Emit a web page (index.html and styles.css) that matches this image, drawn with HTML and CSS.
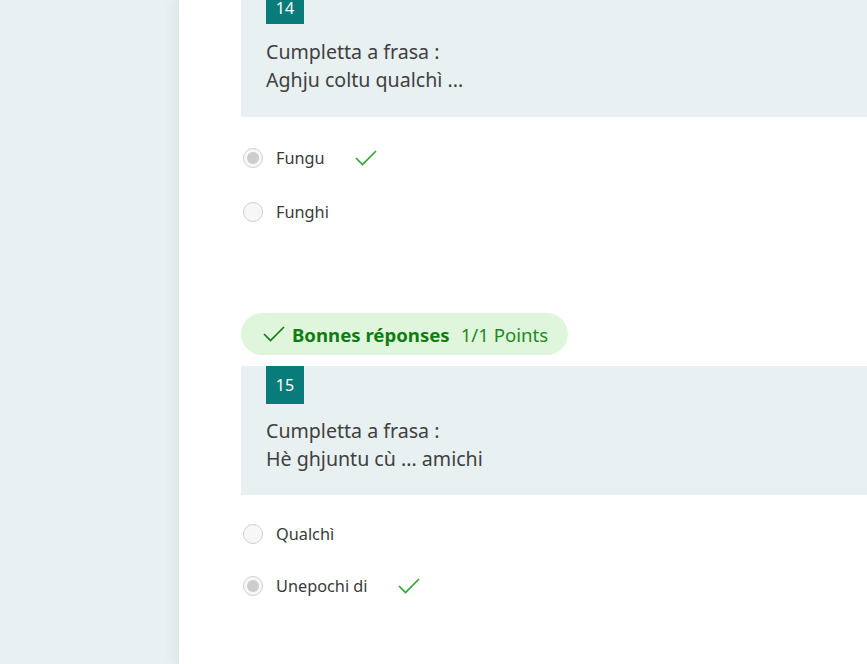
FILE: index.html
```html
<!DOCTYPE html>
<html>
<head>
<meta charset="utf-8">
<link rel="stylesheet" href="styles.css">
</head>
<body>
<div class="page">
  <div class="side"></div>
  <main class="card">
    <section class="question first">
      <div class="qblock">
        <div class="num">14</div>
        <div class="qtext">Cumpletta a frasa :<br>Aghju coltu qualchì ...</div>
      </div>
      <div class="options">
        <div class="opt"><span class="radio on"></span><span class="label">Fungu</span>
          <svg class="tick" width="22" height="16" viewBox="0 0 22 16"><path d="M1 8 L7.5 14.5 L21 1" fill="none" stroke="#2ea52e" stroke-width="1.6"/></svg></div>
        <div class="opt"><span class="radio"></span><span class="label">Funghi</span></div>
      </div>
    </section>

    <section class="question second">
      <div class="pill">
        <svg class="pilltick" width="22" height="16" viewBox="0 0 22 16"><path d="M1 8 L7.5 14.5 L21 1" fill="none" stroke="#107c10" stroke-width="1.6"/></svg>
        <span class="good">Bonnes réponses</span>
        <span class="pts">1/1 Points</span>
      </div>
      <div class="qblock">
        <div class="num">15</div>
        <div class="qtext">Cumpletta a frasa :<br>Hè ghjuntu cù ... amichi</div>
      </div>
      <div class="options tight">
        <div class="opt"><span class="radio"></span><span class="label">Qualchì</span></div>
        <div class="opt"><span class="radio on"></span><span class="label">Unepochi di</span>
          <svg class="tick" width="22" height="16" viewBox="0 0 22 16"><path d="M1 8 L7.5 14.5 L21 1" fill="none" stroke="#2ea52e" stroke-width="1.6"/></svg></div>
      </div>
    </section>
  </main>
</div>
</body>
</html>
```

FILE: styles.css
```css
html, body {
  margin: 0;
  padding: 0;
  height: 100%;
  overflow: hidden;
}
body {
  background: #e9f0f2;
  font-family: "Noto Sans", "Open Sans", sans-serif;
  color: #333;
}
.page {
  display: flex;
  height: 664px;
}
.side {
  width: 179px;
  flex: none;
}
.card {
  flex: 1;
  background: #fff;
  padding-left: 62px;
  box-shadow: -4px 0 12px rgba(60, 90, 100, 0.08);
}
.question.first {
  margin-top: -13px;
}
.qblock {
  background: #e9f0f2;
  padding: 0 0 22px 25px;
}
.first .qblock {
  padding-bottom: 23px;
}
.num {
  width: 38px;
  height: 38px;
  background: #0a7b7b;
  color: #fff;
  font-size: 16px;
  display: flex;
  align-items: center;
  justify-content: center;
}
.first .num {
  padding-top: 4px;
  height: 33px;
}
.qtext {
  margin-top: 13px;
  font-size: 19.6px;
  line-height: 28px;
  color: #404040;
}
.first .qtext {
  margin-top: 14px;
}
.options {
  padding: 27px 0 0 2px;
  display: flex;
  flex-direction: column;
  gap: 26px;
}
.options.tight {
  padding-top: 25px;
  gap: 24px;
}
.opt {
  display: flex;
  align-items: center;
  height: 28px;
}
.radio {
  width: 18px;
  height: 18px;
  border: 1.5px solid #cfcfcf;
  border-radius: 50%;
  background: #f7f7f7;
  box-sizing: content-box;
  display: flex;
  align-items: center;
  justify-content: center;
  flex: none;
}
.radio.on::after {
  content: "";
  width: 12px;
  height: 12px;
  border-radius: 50%;
  background: #cdcdcd;
}
.label {
  margin-left: 13px;
  font-size: 16.3px;
  color: #3a3a3a;
}
.tick {
  margin-left: 30px;
}
.second {
  margin-top: 87px;
}
.pill {
  display: inline-flex;
  align-items: center;
  height: 42px;
  border-radius: 21px;
  background: #dff6dd;
  padding: 0 20px 0 22px;
  margin-bottom: 11px;
  font-size: 18.6px;
}
.pilltick {
  margin-right: 7px;
}
.good {
  font-weight: 700;
  color: #107c10;
}
.pts {
  margin-left: 11px;
  color: #1c8a1c;
}
```
